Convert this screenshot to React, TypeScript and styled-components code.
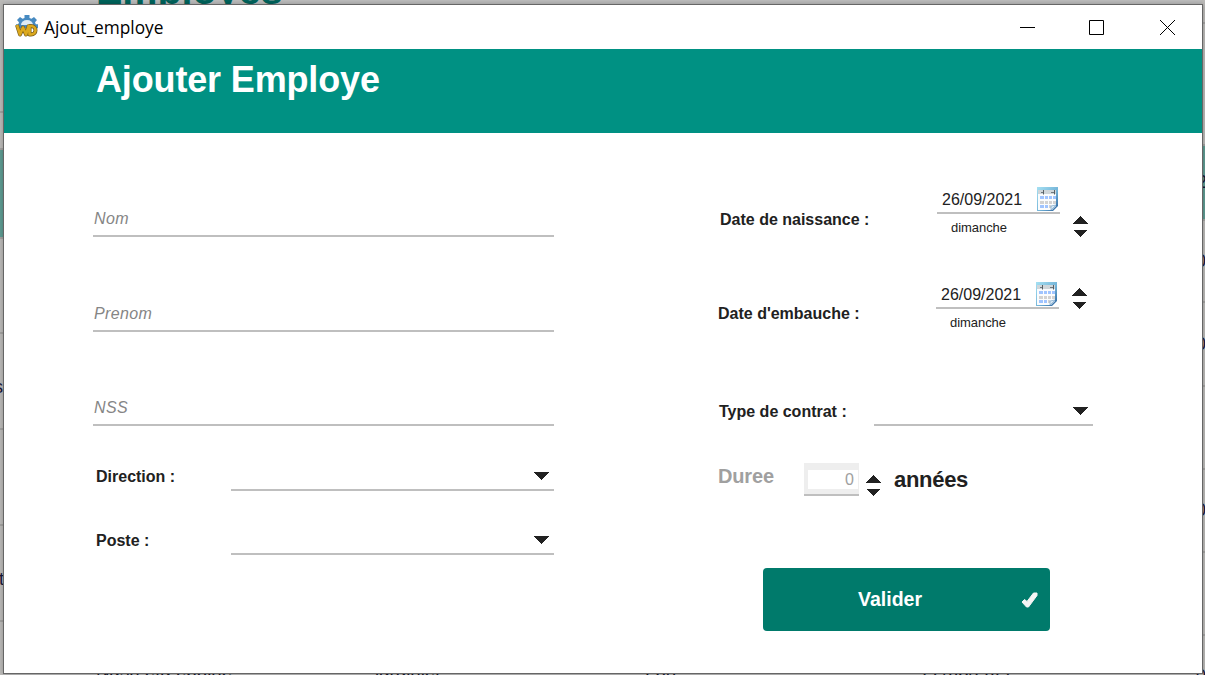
import React from "react";
import styled, { createGlobalStyle } from "styled-components";

const GlobalStyle = createGlobalStyle`
  * { box-sizing: border-box; }
  body {
    margin: 0;
    overflow: hidden;
    font-family: "Liberation Sans", Arial, sans-serif;
    color: #212121;
  }
  button, input { font: inherit; }
`;

const Desktop = styled.div`
  position: relative;
  width: 1205px;
  height: 675px;
  overflow: hidden;
  background: #bdbdbd;
`;

const Backdrop = styled.div`
  height: 675px;
`;

const BackTitle = styled.div`
  position: absolute;
  left: 96px;
  top: -32px;
  font-size: 39.500px;
  line-height: 44px;
  font-weight: bold;
  color: #00645c;
`;

const BackList = styled.div<{ $side: "left" | "right" }>`
  position: absolute;
  top: 0;
  ${(p) => p.$side}: 0;
  width: 4px;
  display: flex;
  flex-direction: column;
`;

const BackRow = styled.div<{ $height: number; $teal?: boolean; $shift?: number; $drop?: number }>`
  flex: none;
  display: flex;
  align-items: center;
  height: ${(p) => p.$height}px;
  border-bottom: 2px solid #a3a2a0;
  background: ${(p) => (p.$teal ? "#5f9c93" : "#bcbbb9")};
  font-size: 18px;
  text-indent: ${(p) => p.$shift ?? 0}px;
  padding-top: ${(p) => p.$drop ?? 0}px;
  color: #17173a;
`;

const BackFooter = styled.div`
  position: absolute;
  left: 0;
  top: 661px;
  display: grid;
  grid-template-columns: 279px 270px 277px 200px;
  padding-left: 96px;
  width: 1205px;
  height: 20px;
  font-size: 18.700px;
  line-height: 20px;
  color: #15152a;
`;

const Window = styled.main`
  position: absolute;
  left: 3px;
  top: 4px;
  width: 1200px;
  height: 670px;
  display: flex;
  flex-direction: column;
  border: 1px solid #666;
  background: #fff;
  box-shadow: 0 0 5px rgba(0, 0, 0, 0.25);
`;

const TitleBar = styled.header`
  display: flex;
  align-items: center;
  height: 44px;
  padding-left: 11px;
  color: #000;
`;

const TitleText = styled.span`
  margin: 1px 0 0 5px;
  font-family: "Open Sans", "Noto Sans", sans-serif;
  font-size: 17.300px;
  line-height: 24px;
  flex: 1;
`;

const Controls = styled.div`
  display: flex;
  margin-right: 26px;
  & > :nth-child(2) { margin: 0 55px 0 54px; }
`;

const Banner = styled.div`
  height: 84px;
  padding: 10px 0 0 92px;
  background: #009183;
`;

const BannerTitle = styled.h1`
  margin: 0;
  color: #fff;
  font-size: 36px;
  line-height: 42px;
  font-weight: bold;
  letter-spacing: -0.15px;
`;

const Form = styled.form`
  flex: 1;
  display: flex;
  justify-content: space-between;
  padding: 0 109px 0 89px;
`;

const Identity = styled.section`
  width: 461px;
  padding-top: 9px;
`;

const Contract = styled.section`
  width: 375px;
  padding-top: 54px;
`;

const TextField = styled.input<{ $height: number }>`
  display: block;
  width: 100%;
  height: ${(p) => p.$height}px;
  padding: ${(p) => p.$height - 27}px 0 7px 1px;
  border: 0;
  border-bottom: 2px solid #bfbfbf;
  border-radius: 0;
  outline: 0;
  background: transparent;
  font-size: 16px;
  letter-spacing: 0.35px;
  line-height: 18px;
  &::placeholder {
    color: #858585;
    opacity: 1;
    font-style: italic;
  }
`;

const SelectRow = styled.div<{ $height: number; $indent: number; $select: number }>`
  display: flex;
  align-items: flex-end;
  justify-content: space-between;
  height: ${(p) => p.$height}px;
  padding-left: ${(p) => p.$indent}px;
  & > :last-child { width: ${(p) => p.$select}px; }
`;

const Label = styled.label`
  padding-bottom: 5px;
  font-size: 16px;
  line-height: 18px;
  font-weight: bold;
  white-space: nowrap;
`;

const SelectBox = styled.div`
  display: flex;
  justify-content: flex-end;
  height: 27px;
  padding: 8px 5px 0 0;
  border-bottom: 2px solid #bfbfbf;
`;

const DateRow = styled.div<{ $indent: number; $height: number; $end: number }>`
  display: flex;
  height: ${(p) => p.$height}px;
  padding: 0 ${(p) => p.$end}px 0 ${(p) => p.$indent}px;
`;

const DateLabel = styled(Label)<{ $top: number }>`
  flex: 1;
  padding-top: ${(p) => p.$top}px;
`;

const DateBlock = styled.div`
  width: 123px;
`;

const DateValue = styled.div`
  display: flex;
  justify-content: space-between;
  height: 27px;
  padding: 0 2px 0 5px;
  border-bottom: 2px solid #bfbfbf;
  font-size: 16px;
  line-height: 25px;
`;

const DayName = styled.div`
  padding: 6px 0 0 14px;
  font-size: 13px;
  line-height: 15px;
  letter-spacing: -0.05px;
`;

const Stepper = styled.div<{ $top: number; $left?: number }>`
  margin: ${(p) => p.$top}px 0 0 ${(p) => p.$left ?? 13}px;
  height: 22px;
  line-height: 0;
`;

const DurationRow = styled.div`
  display: flex;
  height: 33px;
  margin-top: 37px;
`;

const DurationLabel = styled.label`
  width: 86px;
  padding-top: 2px;
  font-size: 20px;
  line-height: 23px;
  font-weight: bold;
  letter-spacing: -0.15px;
  color: #a0a0a0;
`;

const DurationBox = styled.div`
  width: 55px;
  height: 33px;
  padding: 7px 1px 5px 4px;
  border-bottom: 2px solid #bfbfbf;
  background: #eee;
`;

const DurationValue = styled.div`
  height: 19px;
  padding-right: 4px;
  background: #fff;
  color: #a0a0a0;
  font-size: 16px;
  line-height: 19px;
  text-align: right;
`;

const Unit = styled.span`
  padding: 4px 0 0 13px;
  font-size: 22px;
  line-height: 25px;
  font-weight: bold;
  letter-spacing: -0.3px;
`;

const SubmitButton = styled.button`
  display: grid;
  grid-template-columns: 1fr auto;
  align-items: center;
  width: 287px;
  height: 63px;
  margin: 72px 0 0 45px;
  padding: 0 11px 0 0;
  border: 0;
  border-radius: 4px;
  background: #007a6b;
  color: #fff;
  font-size: 19.500px;
  font-weight: bold;
  line-height: 23px;
  & > span { padding-right: 3px; }
`;

const AppLogo = () => (
  <svg width="24" height="24" viewBox="0 0 24 24">
    <path
      d="M9.500 0h5v3l2 .8L19 2l3 3-2 2.300.8 2h2.200v4H1v-4h2.200l.8-2L2 5l3-3 2.500 1.800 2-.8z"
      fill="#478ac1"
    />
    <path d="M6 10a6 5 0 0 1 12 0z" fill="#dfebf4" />
    <g fill="none" strokeLinejoin="round">
      <path d="M2 10l3 9.500 3-7 3 7 3-9.500M14.500 11H16c6 0 6 8.500 0 8.500h-1.500z" stroke="#775d1c" strokeWidth="4" />
      <path d="M2 10l3 9.500 3-7 3 7 3-9.500M14.500 11H16c6 0 6 8.500 0 8.500h-1.500z" stroke="#dca91d" strokeWidth="2.600" />
    </g>
  </svg>
);

const Calendar = () => (
  <svg width="21" height="24" viewBox="0 0 21 24">
    <defs>
      <linearGradient id="frame" x1="0" y1="0" x2="1" y2="1">
        <stop offset="0" stopColor="#a6e1f3" />
        <stop offset="0.55" stopColor="#74b4d8" />
        <stop offset="1" stopColor="#285f9b" />
      </linearGradient>
    </defs>
    <path d="M0 0h21v19l-5 5H0z" fill="url(#frame)" />
    <path d="M1 3h18v16l-4 4H1z" fill="#fbfcfd" />
    <path d="M1 3h18v4H1z" fill="#cfd6da" />
    <path d="M4 5.500h2M14 5.500h3" stroke="#70787e" />
    <path d="M6.500 3v4.500M17.500 3v4.500" stroke="#586066" />
    <path d="M3 9h4v3H3zM8 9h3v3H8zM12 9h3v3h-3zM16 9h3v3h-3zM3 18h4v3H3zM8 18h3v3H8z" fill="#a0c4ff" />
    <path d="M3 14h4v3H3zM8 14h3v3H8zM12 14h3v3h-3zM16 14h3v3h-3zM12 18h2v3h-2z" fill="#d2d2d2" />
    <path d="M14 23v-4l5-1z" fill="#dceaf5" stroke="#77a5cb" strokeWidth=".7" />
  </svg>
);

const DownArrow = () => (
  <svg width="15" height="8" viewBox="0 0 15 8" shapeRendering="crispEdges">
    <path d="M0 0h15L7.500 8z" fill="#212121" />
  </svg>
);

const StepArrows = () => (
  <svg width="15" height="21" viewBox="0 0 15 21" shapeRendering="crispEdges">
    <path d="M7.500 0L15 8H0zM1 14h13l-6.500 7z" fill="#212121" />
  </svg>
);

const CheckMark = () => (
  <svg width="19" height="18" viewBox="0 0 19 18">
    <path d="M2 11l2.500-2.500L7 10.500 13.500 2h3.500v2.500L8.500 16H6.500z" fill="#f5f5f5" stroke="#f5f5f5" strokeWidth="1" strokeLinejoin="round" />
  </svg>
);

export default function App() {
  return (
    <>
      <GlobalStyle />
      <Desktop>
        <Backdrop aria-hidden="true">
          <BackTitle>Employes</BackTitle>
          <BackList $side="left">
            <BackRow $height={113} />
            <BackRow $height={37} />
            <BackRow $height={89} $teal />
            <BackRow $height={95} />
            <BackRow $height={96} $shift={-6} $drop={12}>s</BackRow>
            <BackRow $height={96} />
            <BackRow $height={96} $shift={-1} $drop={12}>t</BackRow>
            <BackRow $height={96} />
          </BackList>
          <BackList $side="right">
            <BackRow $height={24} />
            <BackRow $height={122} />
            <BackRow $height={75} $teal $shift={-4} $drop={-14}>2</BackRow>
            <BackRow $height={82} $shift={-5}>0</BackRow>
            <BackRow $height={84} $shift={-5}>0</BackRow>
            <BackRow $height={83} />
            <BackRow $height={83} $shift={-5}>0</BackRow>
            <BackRow $height={83} />
            <BackRow $height={83} $shift={-5}>0</BackRow>
          </BackList>
          <BackFooter>
            <span>Nasri eta epoine</span>
            <span>jardinier</span>
            <span>Lon</span>
            <span>22/08/2022</span>
          </BackFooter>
        </Backdrop>
        <Window>
          <TitleBar>
            <AppLogo />
            <TitleText>Ajout_employe</TitleText>
            <Controls>
              <svg width="15" height="15"><path d="M0 7.500h15" stroke="#000" /></svg>
              <svg width="15" height="15"><path d="M.5.5h14v14H.5z" fill="none" stroke="#000" /></svg>
              <svg width="17" height="15"><path d="M1 0l15 15M16 0L1 15" stroke="#000" /></svg>
            </Controls>
          </TitleBar>
          <Banner>
            <BannerTitle>Ajouter Employe</BannerTitle>
          </Banner>
          <Form onSubmit={(e) => e.preventDefault()}>
            <Identity>
              <TextField $height={95} placeholder="Nom" />
              <TextField $height={95} placeholder="Prenom" />
              <TextField $height={94} placeholder="NSS" />
              <SelectRow $height={65} $indent={3} $select={323}>
                <Label>Direction :</Label>
                <SelectBox><DownArrow /></SelectBox>
              </SelectRow>
              <SelectRow $height={64} $indent={3} $select={323}>
                <Label>Poste :</Label>
                <SelectBox><DownArrow /></SelectBox>
              </SelectRow>
            </Identity>
            <Contract>
              <DateRow $height={95} $indent={2} $end={5}>
                <DateLabel $top={24}>Date de naissance :</DateLabel>
                <DateBlock>
                  <DateValue>26/09/2021<Calendar /></DateValue>
                  <DayName>dimanche</DayName>
                </DateBlock>
                <Stepper $top={29}><StepArrows /></Stepper>
              </DateRow>
              <DateRow $height={95} $indent={0} $end={6}>
                <DateLabel $top={23}>Date d'embauche :</DateLabel>
                <DateBlock>
                  <DateValue>26/09/2021<Calendar /></DateValue>
                  <DayName>dimanche</DayName>
                </DateBlock>
                <Stepper $top={6}><StepArrows /></Stepper>
              </DateRow>
              <SelectRow $height={49} $indent={1} $select={219}>
                <Label>Type de contrat :</Label>
                <SelectBox><DownArrow /></SelectBox>
              </SelectRow>
              <DurationRow>
                <DurationLabel>Duree</DurationLabel>
                <DurationBox><DurationValue>0</DurationValue></DurationBox>
                <Stepper $top={12} $left={7}><StepArrows /></Stepper>
                <Unit>années</Unit>
              </DurationRow>
              <SubmitButton><span>Valider</span><CheckMark /></SubmitButton>
            </Contract>
          </Form>
        </Window>
      </Desktop>
    </>
  );
}
